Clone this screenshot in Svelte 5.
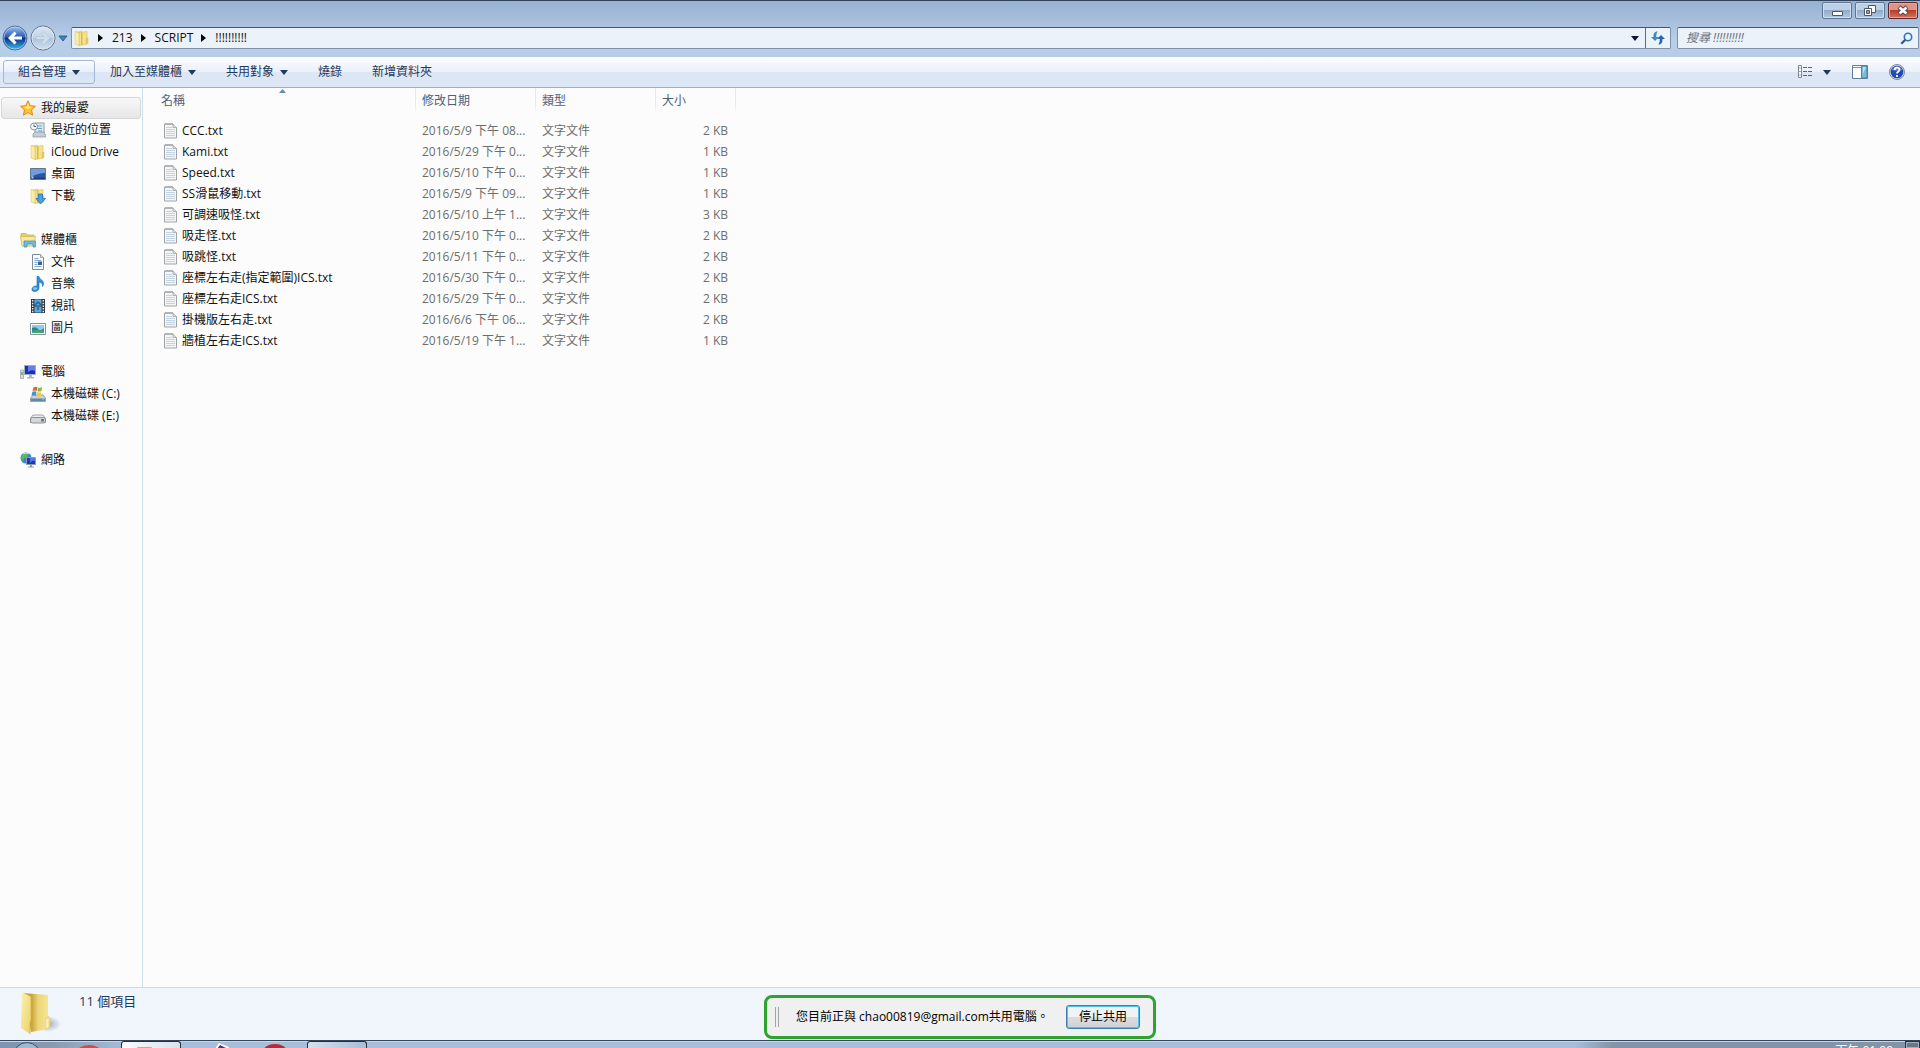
<script>
	const crumbs = ['213', 'SCRIPT', '!!!!!!!!!!'];

	const commands = [
		{ label: '組合管理', menu: true, hot: true },
		{ label: '加入至媒體櫃', menu: true },
		{ label: '共用對象', menu: true },
		{ label: '燒錄' },
		{ label: '新增資料夾' }
	];

	const groups = [
		{
			label: '我的最愛',
			icon: 'star',
			active: true,
			items: [
				{ label: '最近的位置', icon: 'recent' },
				{ label: 'iCloud Drive', icon: 'folder' },
				{ label: '桌面', icon: 'desktop' },
				{ label: '下載', icon: 'download' }
			]
		},
		{
			label: '媒體櫃',
			icon: 'library',
			items: [
				{ label: '文件', icon: 'document' },
				{ label: '音樂', icon: 'music' },
				{ label: '視訊', icon: 'video' },
				{ label: '圖片', icon: 'picture' }
			]
		},
		{
			label: '電腦',
			icon: 'computer',
			items: [
				{ label: '本機磁碟 (C:)', icon: 'system' },
				{ label: '本機磁碟 (E:)', icon: 'drive' }
			]
		},
		{ label: '網路', icon: 'network', items: [] }
	];

	const files = [
		{ name: 'CCC.txt', date: '2016/5/9 下午 08...', size: '2 KB' },
		{ name: 'Kami.txt', date: '2016/5/29 下午 0...', size: '1 KB' },
		{ name: 'Speed.txt', date: '2016/5/10 下午 0...', size: '1 KB' },
		{ name: 'SS滑鼠移動.txt', date: '2016/5/9 下午 09...', size: '1 KB' },
		{ name: '可調速吸怪.txt', date: '2016/5/10 上午 1...', size: '3 KB' },
		{ name: '吸走怪.txt', date: '2016/5/10 下午 0...', size: '2 KB' },
		{ name: '吸跳怪.txt', date: '2016/5/11 下午 0...', size: '2 KB' },
		{ name: '座標左右走(指定範圍)ICS.txt', date: '2016/5/30 下午 0...', size: '2 KB' },
		{ name: '座標左右走ICS.txt', date: '2016/5/29 下午 0...', size: '2 KB' },
		{ name: '掛機版左右走.txt', date: '2016/6/6 下午 06...', size: '2 KB' },
		{ name: '牆植左右走ICS.txt', date: '2016/5/19 下午 1...', size: '1 KB' }
	];

	let sharing = $state(true);
</script>

{#snippet folder()}
	<path d="M1 1.5 8 .8V14L5 15.5 1 14z" fill="#ecd673" />
	<path d="M5 2.5 13 1.5V14L5 15.5z" fill="#f5e28c" stroke="#d9bd55" stroke-width=".6" />
	<path d="M1 1.5 5 3V15.5L1 14z" fill="#f9eda9" stroke="#dcc262" stroke-width=".5" />
	<path d="M7 2.5h1.5V15H7z" fill="#d8ba4e" />
	<path d="M12 8.5 14 8v5.5l-2 1z" fill="#e8cd68" stroke="#cfb250" stroke-width=".4" />
{/snippet}

{#snippet icon(name)}
	<svg class="icon" viewBox="0 0 16 16" aria-hidden="true">
		{#if name === 'star'}
			<path
				d="m8 .8 2.2 4.9 5.2.6-3.9 3.6 1.1 5.3L8 12.5l-4.6 2.7 1.1-5.3L.6 6.3l5.2-.6z"
				fill="#ffc32e"
				stroke="#df8820"
				stroke-width="1"
			/>
			<path d="m8 3 1.4 3.7 3 .4L8 9 4 7.1l2.6-.4z" fill="#ffed92" />
		{:else if name === 'recent'}
			<path d="M5 1h9v12H5z" fill="#dceaf4" stroke="#8a9aa8" />
			<path d="M7 4h5M7 6.500h5M8 9h4" stroke="#6f9fc4" />
			<path d="m3 12 2-2h9l1.500 3v2H3z" fill="#c5ced6" stroke="#8a949e" stroke-width=".7" />
			<circle cx="4" cy="4.500" r="3.500" fill="#f3f6f8" stroke="#8c979f" />
			<path d="M4 2.500v2h2" fill="none" stroke="#45627a" />
		{:else if name === 'folder'}
			{@render folder()}
		{:else if name === 'desktop'}
			<path d="M.5 2.500h15v11H.5z" fill="#2858a4" stroke="#61778f" />
			<path d="M1 3h14v4Q8 7 1 11z" fill="#6f9de0" />
			<path d="M1 11.500h14V13H1z" fill="#243d66" />
			<path d="M1.500 10.500h2v2h-2z" fill="#9ed3f5" />
		{:else if name === 'download'}
			{@render folder()}
			<path
				d="M8.500 6h4v4.500h3L10.500 16 6 10.500h2.500z"
				fill="#43a4e4"
				stroke="#2272b5"
				stroke-width=".8"
			/>
		{:else if name === 'library'}
			<path d="M1 3V1.500h5L7 3h7v3H1z" fill="#edcf69" stroke="#c9a945" stroke-width=".7" />
			<path d="M.5 4.500h15L14 14H2z" fill="#f9e99c" stroke="#cfb250" stroke-width=".7" />
			<path d="M4 9h11.500v6H13v-3H7v3H4z" fill="#6bc0e4" stroke="#398bb4" stroke-width=".7" />
		{:else if name === 'document'}
			<path d="M2.500.5h8l3 3v12h-11z" fill="#fafcfe" stroke="#7f8d99" />
			<path d="M10.500.5v3h3" fill="#d4dfe8" stroke="#7f8d99" stroke-width=".7" />
			<path d="M4.500 4.500h4M4.500 6.500h7M4.500 8.500h3M4.500 10.500h3M4.500 12.500h7" stroke="#86a9d0" />
			<path d="M8 7.500h4v3.500H8z" fill="#32649f" />
		{:else if name === 'music'}
			<path
				d="M7 .5h2c0 3 4.500 3 4.500 7 0 2-1 3-1 3 .5-3-1.500-4-3.500-4.500v6c0 2-2 3.500-4.500 3.500S2 14.500 2 13s2-3.500 5-3z"
				fill="#2f8fdc"
				stroke="#1964ab"
				stroke-width=".6"
			/>
			<ellipse cx="5" cy="12.500" rx="2" ry="1.200" fill="#84caf6" />
		{:else if name === 'video'}
			<path d="M1 1h14v14H1z" fill="#30363f" />
			<path d="M4.500 1.500h7v6h-7zM4.500 8.500h7v6h-7z" fill="#5aa9dd" />
			<path d="m5 7 3-3 3 3M8 9v3" fill="none" stroke="#205e98" stroke-width="1.500" />
			<path d="M2.700 2v13M13.300 2v13" stroke="#e9edf0" stroke-width="1.400" stroke-dasharray="1.500 1.200" />
		{:else if name === 'picture'}
			<path d="M.5 3.500h15v11H.5z" fill="#fff" stroke="#84919c" />
			<path d="M2 5h12v8H2z" fill="#88cdee" />
			<path d="M2 8q4-2 6 1t6-1v5H2z" fill="#337b9b" />
			<path d="M2 11q5-2 12 0v2H2z" fill="#45a36b" />
		{:else if name === 'computer'}
			<path d="M.5 6h3v8.500h-3z" fill="#d5dce1" stroke="#87939e" stroke-width=".6" />
			<path d="M1.200 8h1.500v3H1.200z" fill="#68a855" />
			<path d="M4.500 1.500h11v9h-11z" fill="#1832b8" stroke="#a1acb8" />
			<path d="M8 2h7v5Q11 5 8 8z" fill="#667de3" />
			<path d="M9 11h3v2h2v1.500H7V13h2z" fill="#aeb8c1" />
		{:else if name === 'system'}
			<path d="m3 9-2.500 3v3.500h15V12L13 9z" fill="#cad3da" stroke="#7d8a94" stroke-width=".7" />
			<path d="M1 12.500h14V15H1z" fill="#5d8ba5" />
			<path d="M12 13.500h2" stroke="#63d45e" />
			<path d="M3.500 1.500Q6 .2 7.500 1.200L6.700 5Q5 4 2.500 5z" fill="#e4622e" />
			<path d="M8.200 1.500q2 1 4-.5l-.8 4Q9 6 7.400 5.200z" fill="#82bb39" />
			<path d="M2.300 5.800q2.500-1 4.200 0L5.700 10q-2-1.300-4.200-.3z" fill="#4094d6" />
			<path d="M7.200 6q2 1.200 4 0l-.8 4q-2 1.300-4 .2z" fill="#f8c92e" />
		{:else if name === 'drive'}
			<path d="m3 7-2.500 3.500v4h15v-4L13 7z" fill="#eceeef" stroke="#8d9296" stroke-width=".8" />
			<rect x=".5" y="9.500" width="15" height="5.500" rx="2" fill="#d5d8da" stroke="#777c80" stroke-width=".8" />
			<path d="M11 11h3v2.500h-3z" fill="#6c7477" />
		{:else if name === 'network'}
			<circle cx="6" cy="6" r="5.500" fill="#3289ca" />
			<path d="M2 3q3-3 6-1l-1 3-3 1-1 3-2-3zM6 8l3 1-1 3-2-1z" fill="#5dbb50" />
			<path d="M3 2q3-2 6 0" fill="none" stroke="#b5e4f6" />
			<path d="M6.500 5.500h9v7h-9z" fill="#1939b6" stroke="#8e9baa" />
			<path d="M10 6h5v3q-3-1-5 2z" fill="#5977df" />
			<path d="M10 13h2v1.500h2v1H8v-1h2z" fill="#8f9caa" />
		{:else if name === 'text'}
			<path d="M2.500 1H11l3.500 3.500V15h-12z" fill="#f4f6f7" stroke="#a0a3a6" />
			<path d="M4 4.500h6M4 6.500h9M4 8.500h9M4 10.500h9M4 12.500h9" stroke="#c3d3df" />
			<path d="M4 0v2M6 0v2M8 0v2M10 0v2" stroke="#898d91" stroke-width=".8" />
			<path d="M11 1v3.500h3.500" fill="#dce2e6" stroke="#a0a3a6" stroke-width=".8" />
		{/if}
	</svg>
{/snippet}

{#snippet caret()}
	<svg class="caret" viewBox="0 0 8 5" aria-hidden="true"><path d="M0 0h8L4 5z" fill="currentColor" /></svg>
{/snippet}

<div class="screen">
	<main class="explorer">
		<header class="frame">
			<div class="titlebar">
				<button class="control" aria-label="最小化">
					<svg viewBox="0 0 28 15"><path d="M9.500 8.500h10v4h-10z" fill="#fff" stroke="#4d5866" /></svg>
				</button>
				<button class="control" aria-label="還原">
					<svg viewBox="0 0 28 15" fill="none">
						<path d="M12.500 2.500h7v7h-7z" fill="#fff" stroke="#4d5866" />
						<path d="M8.500 5.500h7v7h-7z" fill="#fff" stroke="#4d5866" />
						<path d="M10.500 7.500h3v3h-3z" fill="#8fa8c6" stroke="#4d5866" />
					</svg>
				</button>
				<button class="control close" aria-label="關閉">
					<svg viewBox="0 0 28 15" fill="none">
						<path d="m10 4 8 7m0-7-8 7" stroke="#504249" stroke-width="4.500" />
						<path d="m10.500 4.500 7 6m0-6-7 6" stroke="#fff" stroke-width="2.800" />
					</svg>
				</button>
			</div>

			<nav class="addressbar">
				<div class="travel">
					<button class="round" aria-label="上一頁">
						<svg viewBox="0 0 26 26">
							<defs>
								<linearGradient id="back" x2="0" y2="1">
									<stop offset="0" stop-color="#a5c3ee" />
									<stop offset=".45" stop-color="#2b5eb5" />
									<stop offset=".52" stop-color="#0b3388" />
									<stop offset="1" stop-color="#36c2f4" />
								</linearGradient>
							</defs>
							<circle cx="13" cy="13" r="12" fill="url(#back)" stroke="#526f97" />
							<circle cx="13" cy="13" r="11" fill="none" stroke="#c3d9f2" stroke-width=".6" />
							<path d="m6 13 6.500-6.500 2 2L12 11.500h8v3h-8l2.500 3-2 2z" fill="#fff" />
						</svg>
					</button>
					<button class="round" aria-label="下一頁">
						<svg viewBox="0 0 26 26">
							<defs>
								<linearGradient id="forward" x2="0" y2="1">
									<stop offset="0" stop-color="#dae6f3" />
									<stop offset=".48" stop-color="#c3d3e6" />
									<stop offset=".52" stop-color="#afc2d9" />
									<stop offset="1" stop-color="#d2e2f2" />
								</linearGradient>
							</defs>
							<circle cx="13" cy="13" r="12" fill="url(#forward)" stroke="#62748b" />
							<circle cx="13" cy="13" r="11" fill="none" stroke="#e4eef8" stroke-width=".7" />
							<path d="m20 13-6.500-6.500-2 2 2.500 3H6v3h8l-2.500 3 2 2z" fill="#d0ddeb" stroke="#a8bad0" stroke-width=".5" />
						</svg>
					</button>
					<button class="recent" aria-label="最近的頁面">
						<svg viewBox="0 0 10 7"><path d="M1 1h8L5 6z" fill="#3e86bd" stroke="#1e4c7a" stroke-width=".8" /></svg>
					</button>
				</div>

				<div class="address">
					<svg class="icon" viewBox="0 0 16 16" aria-hidden="true">{@render folder()}</svg>
					{#each crumbs as crumb}
						<svg class="crumb-arrow" viewBox="0 0 5 8" aria-hidden="true"><path d="M0 0 5 4 0 8z" /></svg>
						<a href="#{crumb}">{crumb}</a>
					{/each}
					<button class="history" aria-label="先前的位置">{@render caret()}</button>
					<button class="refresh" aria-label="重新整理">
						<svg viewBox="0 0 16 14">
							<path d="M7.500.5C4 .5 3.500 3 3.500 6H1l4 4 4-4H6.200c0-2 .2-3.500 1.300-5.500z" fill="#368bc9" />
							<path d="M8.500 13.500c3.500 0 4-2.500 4-5.500H15l-4-4-4 4h2.800c0 2-.2 3.500-1.300 5.500z" fill="#2b67ad" />
						</svg>
					</button>
				</div>

				<label class="search">
					<input type="search" placeholder="搜尋 !!!!!!!!!!" aria-label="搜尋" />
					<svg viewBox="0 0 13 13" aria-hidden="true">
						<circle cx="8" cy="5" r="3.700" fill="#e5f3fc" stroke="#3474ad" stroke-width="1.600" />
						<path d="m5.300 7.700-4 4" stroke="#2d568a" stroke-width="2.200" />
					</svg>
				</label>
			</nav>
		</header>

		<div class="commands">
			{#each commands as command}
				<button class="command" class:hot={command.hot}>
					{command.label}
					{#if command.menu}{@render caret()}{/if}
				</button>
			{/each}
			<div class="views">
				<button class="view" aria-label="變更檢視">
					<svg class="icon" viewBox="0 0 16 14">
						<path d="M1.500.5h3v12h-3z" fill="#fff" stroke="#7b899b" />
						<path d="M2.500 3h1M2.500 6.500h1M2.500 10h1" stroke="#36577e" />
						<path d="M6 2.500h4M11 2.500h4M6 6.500h4M11 6.500h4M6 10.500h4M11 10.500h4" stroke="#4a668a" />
					</svg>
					{@render caret()}
				</button>
				<button class="view" aria-label="顯示預覽窗格">
					<svg class="icon" viewBox="0 0 16 14">
						<path d="M.5.5h15v13H.5z" fill="#fff" stroke="#607b9b" />
						<path d="M1 2.500h9" stroke="#7a91aa" />
						<path d="M9.500 1H15v12H9.500z" fill="#79bfda" stroke="#4c86a8" />
						<path d="M11 2h3L11 9z" fill="#b7e1ee" />
					</svg>
				</button>
				<button class="view" aria-label="說明">
					<svg class="icon" viewBox="0 0 16 16">
						<circle cx="8" cy="8" r="7.500" fill="#d2d9e4" stroke="#7e8a9c" />
						<circle cx="8" cy="8" r="6.300" fill="#2349b3" />
						<path d="M2.500 6a6 6 0 0 1 11 0Q8 8 2.500 6" fill="#5b80d4" />
						<path d="M5.700 6c0-3 4.800-3 4.800-.3C10.500 7.500 8 7.500 8 9.500M8 11v2" fill="none" stroke="#fff" stroke-width="1.800" />
					</svg>
				</button>
			</div>
		</div>

		<div class="body">
			<nav class="sidebar">
				{#each groups as group}
					<div class="group">
						<a class="head" class:active={group.active} href="#{group.icon}">
							{@render icon(group.icon)}{group.label}
						</a>
						{#each group.items as item}
							<a href="#{item.icon}">{@render icon(item.icon)}{item.label}</a>
						{/each}
					</div>
				{/each}
			</nav>

			<section class="content">
				<table>
					<thead>
						<tr>
							<th class="name" aria-sort="ascending">
								名稱
								<svg class="sort" viewBox="0 0 7 4" aria-hidden="true"><path d="M0 4 3.500 0 7 4z" fill="#5f8dac" /></svg>
							</th>
							<th class="date">修改日期</th>
							<th class="type">類型</th>
							<th class="size">大小</th>
						</tr>
					</thead>
					<tbody>
						{#each files as file}
							<tr>
								<td class="name"><div>{@render icon('text')}{file.name}</div></td>
								<td>{file.date}</td>
								<td>文字文件</td>
								<td class="size">{file.size}</td>
							</tr>
						{/each}
					</tbody>
				</table>
			</section>
		</div>

		<footer class="details">
			<svg class="big-folder" viewBox="0 0 42 44" aria-hidden="true">
				<defs>
					<linearGradient id="leaf">
						<stop offset="0" stop-color="#c9a53d" />
						<stop offset=".35" stop-color="#c9a53d" />
						<stop offset=".6" stop-color="#ecd579" />
						<stop offset="1" stop-color="#f4e594" />
					</linearGradient>
					<linearGradient id="cover" y2="1">
						<stop offset="0" stop-color="#fbf2b2" />
						<stop offset="1" stop-color="#ead166" />
					</linearGradient>
					<radialGradient id="shade">
						<stop offset="0" stop-color="#8e99a3" stop-opacity=".8" />
						<stop offset="1" stop-color="#8e99a3" stop-opacity="0" />
					</radialGradient>
				</defs>
				<ellipse cx="28" cy="33" rx="13" ry="8" fill="url(#shade)" />
				<path d="M3 2 28 4V38L11 41z" fill="url(#leaf)" />
				<path d="M2 1 11 6V29l-1 2v12L1 37z" fill="url(#cover)" />
				<path d="M11 6V29l-1 2v12" fill="none" stroke="#d4b34a" stroke-width=".8" />
				<path d="M26 27q3-3 4 0v9l-4 2z" fill="#f3e18b" stroke="#d7bd59" stroke-width=".5" />
				<path d="M27 28v9" stroke="#fff" />
			</svg>
			<span>11 個項目</span>
		</footer>

		{#if sharing}
			<div class="sharing">
				<span class="grip"></span>
				<p>您目前正與 chao00819@gmail.com共用電腦。</p>
				<button onclick={() => (sharing = false)}>停止共用</button>
			</div>
		{/if}
	</main>

	<div class="taskbar">
		<button class="orb" aria-label="開始"><span></span></button>
		<button class="task" aria-label="Chrome">
			<svg viewBox="0 0 58 8"><ellipse cx="29" cy="11" rx="12" ry="7" fill="#d9474b" /></svg>
		</button>
		<button class="task open" aria-label="檔案總管">
			<svg viewBox="0 0 58 8"><path d="M15 8V6q0-1 1-1h13q1 0 1 1v2z" fill="#c6aa7c" /></svg>
		</button>
		<button class="task" aria-label="Paint">
			<svg viewBox="0 0 58 8">
				<path d="m31 8 4-6 10 4v2z" fill="#fff" />
				<path d="m33 8 3-4 6 3v1z" fill="#51317a" />
			</svg>
		</button>
		<button class="task" aria-label="Garena">
			<svg viewBox="0 0 58 8"><ellipse cx="29" cy="11" rx="12" ry="8" fill="#bd2637" /></svg>
		</button>
		<button class="task open pale" aria-label="應用程式"></button>
		<div class="tray">
			<time>下午 01:09</time>
			<button class="peek" aria-label="顯示桌面"></button>
		</div>
	</div>
</div>

<style>
	:global(body) {
		margin: 0;
		overflow: hidden;
	}
	.screen {
		display: flex;
		flex-direction: column;
		height: 100vh;
		font: 12px/16px 'Open Sans', 'Noto Sans CJK TC', sans-serif;
		color: #111;
	}
	button,
	input {
		font: inherit;
		color: inherit;
		margin: 0;
		padding: 0;
		border: 0;
		background: none;
	}
	a {
		color: inherit;
		text-decoration: none;
	}
	svg {
		display: block;
		flex: none;
	}
	.icon {
		width: 16px;
		height: 16px;
	}
	.caret {
		width: 8px;
		height: 5px;
	}

	.explorer {
		position: relative;
		flex: 1;
		min-height: 0;
		display: flex;
		flex-direction: column;
	}
	.frame {
		border-top: 1px solid #2f4257;
		background: linear-gradient(#98b1d0, #a9c1de 22px, #b9cfe8 40px, #b7cde7);
	}
	.titlebar {
		display: flex;
		justify-content: flex-end;
		gap: 3px;
		height: 26px;
		padding: 1px 2px 0 0;
		box-sizing: border-box;
	}
	.control {
		width: 30px;
		height: 17px;
		box-sizing: border-box;
		border: 1px solid #5e7694;
		border-radius: 2px;
		box-shadow: inset 0 0 0 1px #cfdeef;
		background: linear-gradient(#bed0e6 50%, #92abc9 50%, #b2c9e3);
	}
	.control svg {
		width: 28px;
		height: 15px;
	}
	.close {
		border-color: #5b2733;
		box-shadow: inset 0 0 0 1px #e6a89e;
		background: linear-gradient(#dc9688 50%, #bd3c28 50%, #d5745a);
	}

	.addressbar {
		display: flex;
		height: 30px;
		gap: 6px;
		padding-right: 1px;
	}
	.travel {
		display: flex;
		align-items: center;
		gap: 2px;
		width: 65px;
		height: 22px;
		padding-left: 2px;
		box-sizing: border-box;
	}
	.round {
		flex: none;
		width: 26px;
		height: 26px;
	}
	.recent {
		flex: none;
		width: 10px;
	}
	.address,
	.search {
		display: flex;
		align-items: center;
		height: 22px;
		box-sizing: border-box;
		border: 1px solid #7c90a9;
		border-top-color: #43566d;
		border-radius: 2px;
		background: #ebf2fa;
	}
	.address {
		flex: 1;
		padding-left: 2px;
	}
	.crumb-arrow {
		width: 5px;
		height: 8px;
		margin: 0 9px 0 8px;
	}
	.history {
		display: flex;
		align-items: center;
		margin-left: auto;
		padding: 0 6px;
		height: 20px;
		color: #10143c;
	}
	.refresh {
		width: 25px;
		height: 20px;
		border-left: 1px solid #586b82;
	}
	.refresh svg {
		width: 16px;
		height: 14px;
		margin: auto;
	}
	.search {
		width: 242px;
		padding: 0 5px 0 8px;
	}
	.search input {
		flex: 1;
		min-width: 0;
		outline: 0;
	}
	.search input::placeholder {
		color: #6d7379;
		font-style: italic;
		opacity: 1;
	}
	.search svg {
		width: 13px;
		height: 13px;
	}

	.commands {
		display: flex;
		align-items: center;
		height: 30px;
		padding: 0 15px 0 3px;
		border-bottom: 1px solid #a0afc6;
		background: linear-gradient(#fcfdff, #eaf0fa 50%, #dce6f4 52%, #dde7f5);
		color: #1e395b;
	}
	.command {
		display: flex;
		align-items: center;
		gap: 6px;
		height: 24px;
		padding: 0 15px;
		box-sizing: border-box;
	}
	.command.hot {
		padding: 0 14px;
		border: 1px solid #a5b7d2;
		border-radius: 3px;
		background: linear-gradient(#fafcff, #e8effa 50%, #d5e1f2 52%, #dce8f6);
	}
	.views {
		display: flex;
		align-items: center;
		gap: 21px;
		margin-left: auto;
	}
	.view {
		display: flex;
		align-items: center;
		gap: 10px;
	}

	.body {
		display: flex;
		flex: 1;
		min-height: 0;
		background: #fcfcfc;
	}
	.sidebar {
		display: flex;
		flex-direction: column;
		gap: 22px;
		width: 143px;
		flex: none;
		padding: 9px 1px 0;
		box-sizing: border-box;
		border-right: 1px solid #cbdfec;
	}
	.sidebar a {
		display: flex;
		align-items: center;
		gap: 5px;
		height: 22px;
		padding-left: 29px;
		box-sizing: border-box;
		white-space: nowrap;
	}
	.sidebar .head {
		padding-left: 19px;
	}
	.sidebar .active {
		padding-left: 18px;
		border: 1px solid #d6d6d6;
		border-radius: 3px;
		background: linear-gradient(#f8f8f8, #e6e6e6);
	}

	.content {
		flex: 1;
		min-width: 0;
	}
	table {
		table-layout: fixed;
		width: 593px;
		border-spacing: 0;
	}
	th,
	td {
		padding: 0 8px 0 6px;
		box-sizing: border-box;
		text-align: left;
		font-weight: 400;
		white-space: nowrap;
	}
	th {
		position: relative;
		height: 26px;
		border-right: 1px solid;
		border-image: linear-gradient(#dfe7f0, #e7edf4 70%, #fcfcfc) 1;
		color: #4c607a;
	}
	th.name {
		width: 273px;
		padding-left: 18px;
	}
	th.date,
	th.type {
		width: 120px;
	}
	.sort {
		position: absolute;
		top: 1px;
		left: 50%;
		width: 7px;
		height: 4px;
	}
	tbody::before {
		content: '';
		display: block;
		height: 6px;
	}
	td {
		height: 21px;
		color: #6d6d6d;
	}
	td.name {
		padding-left: 19px;
		color: #111;
	}
	td.name div {
		display: flex;
		align-items: center;
		gap: 4px;
	}
	td.size {
		text-align: right;
	}

	.details {
		display: flex;
		gap: 17px;
		height: 52px;
		padding-left: 20px;
		border-top: 1px solid #ccd7e6;
		background: #f1f5fc;
		color: #1e395b;
		font-size: 13px;
	}
	.big-folder {
		width: 42px;
		height: 44px;
		margin-top: 3px;
	}
	.details span {
		padding-top: 5px;
	}

	.sharing {
		position: absolute;
		bottom: 1px;
		left: 50%;
		transform: translateX(-50%);
		display: flex;
		align-items: center;
		width: 392px;
		height: 44px;
		padding: 0 13px 0 8px;
		box-sizing: border-box;
		border: 3px solid #2da42d;
		border-radius: 8px;
		background: #f0f0f0;
		color: #000;
	}
	.grip {
		width: 2px;
		height: 20px;
		border: solid #a5a5a5;
		border-width: 0 1px;
	}
	.sharing p {
		flex: 1;
		margin: 0 0 0 17px;
		white-space: nowrap;
	}
	.sharing button {
		width: 74px;
		height: 24px;
		border: 1px solid #3c7fb1;
		border-radius: 3px;
		box-shadow: inset 0 0 0 1px #48c4e8;
		background: linear-gradient(#f2f2f2 50%, #dcdcdc 50%, #cfd3d6);
	}

	.taskbar {
		display: flex;
		flex: none;
		gap: 2px;
		height: 8px;
		box-sizing: border-box;
		overflow: hidden;
		border-top: 1px solid #34465c;
		box-shadow: inset 0 1px #c8d8ea;
		background: linear-gradient(90deg, #7c95b4, #8799ae 50px, #a7bedb 130px, #a7bedb 82%, #8394a8 84%);
	}
	.orb {
		width: 57px;
		padding-left: 13px;
	}
	.orb span {
		display: block;
		width: 28px;
		height: 28px;
		margin-top: 1px;
		box-sizing: border-box;
		border: 1px solid #334e6b;
		border-radius: 50%;
		background: #9fbad0;
	}
	.task {
		display: flex;
		width: 60px;
		height: 8px;
		box-sizing: border-box;
	}
	.task svg {
		width: 58px;
		height: 8px;
		margin: 0 auto;
	}
	.open {
		border: 1px solid #25303e;
		border-bottom: 0;
		border-radius: 3px 3px 0 0;
		background: linear-gradient(90deg, #fafbfc, #d8e1ea);
	}
	.pale {
		background: linear-gradient(90deg, #d6e0ec, #a9bdd6);
	}
	.tray {
		display: flex;
		gap: 12px;
		margin-left: auto;
		color: #fff;
	}
	.tray time {
		padding-top: 2px;
	}
	.peek {
		width: 15px;
		height: 8px;
		border: 1px solid #273241;
		box-shadow: inset 0 0 0 1px #a6b0bc;
		background: #6b7785;
	}
</style>
